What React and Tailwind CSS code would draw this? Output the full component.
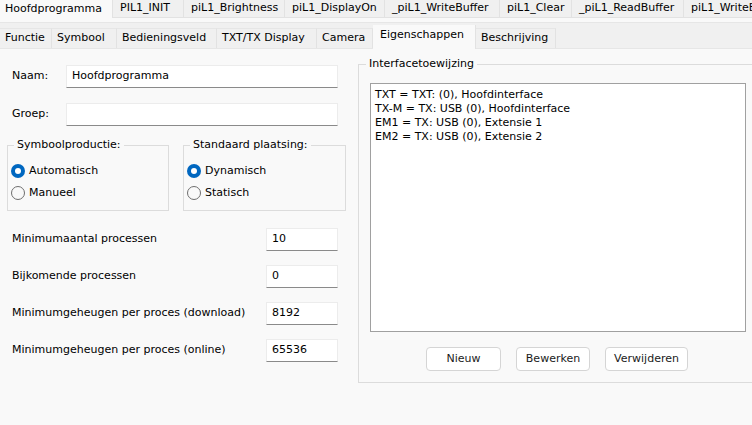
import React from "react";

const row1 = [
  ["Hoofdprogramma", 113, true],
  ["PIL1_INIT", 71],
  ["piL1_Brightness", 101],
  ["piL1_DisplayOn", 100],
  ["_piL1_WriteBuffer", 115],
  ["piL1_Clear", 72],
  ["_piL1_ReadBuffer", 112],
  ["piL1_WriteBuffer", 110],
];
const row2 = [
  ["Functie", 52],
  ["Symbool", 65],
  ["Bedieningsveld", 100],
  ["TXT/TX Display", 100],
  ["Camera", 56],
  ["Eigenschappen", 103, true],
  ["Beschrijving", 80],
];

function Radio({ checked, label }) {
  return (
    <div className="flex items-center h-[22px]">
      {checked ? (
        <span className="w-[14px] h-[14px] rounded-full bg-[#0067c0] flex items-center justify-center shrink-0">
          <span className="w-[6px] h-[6px] rounded-full bg-white" />
        </span>
      ) : (
        <span className="w-[14px] h-[14px] rounded-full border border-[#6e6e6e] bg-[#f9f9f9] shrink-0" />
      )}
      <span className="ml-[4px]">{label}</span>
    </div>
  );
}

function Group({ title, className, children }) {
  return (
    <div className={"relative border border-[#dcdcdc] " + className}>
      <span className="absolute -top-[8px] left-[6px] px-[3px] bg-[#f9f9f9] leading-[14px]">{title}</span>
      {children}
    </div>
  );
}

function Field({ label, value }) {
  return (
    <div className="flex items-center h-[23px]">
      <span className="w-[266px] pl-[12px] shrink-0">{label}</span>
      <div className="w-[72px] h-[23px] bg-white border border-[#ececec] border-b-[#8a8a8a] flex items-center pl-[5px]">
        {value}
      </div>
    </div>
  );
}

function Btn({ children, w }) {
  return (
    <div
      className="h-[24px] bg-white border border-[#d5d5d5] rounded-[4px] flex items-center justify-center text-[#1a1a1a]"
      style={{ width: w }}
    >
      {children}
    </div>
  );
}

export default function App() {
  return (
    <div
      className="w-[752px] h-[425px] overflow-hidden bg-[#f9f9f9] text-[11px] text-black"
      style={{ fontFamily: '"DejaVu Sans", Tahoma, sans-serif' }}
    >
      {/* row 1 tabs */}
      <div className="flex h-[18px] bg-[#f0f0f0] whitespace-nowrap overflow-hidden">
        {row1.map(([t, w, sel]) => (
          <div
            key={t}
            className={
              "shrink-0 h-[18px] flex items-center border-r border-[#e2e2e2] overflow-hidden " +
              (sel ? "bg-[#f9f9f9] pl-[5px]" : "bg-[#f0f0f0] pl-[7px] border-b border-b-[#e2e2e2]")
            }
            style={{ width: w }}
          >
            {t}
          </div>
        ))}
      </div>
      <div className="h-[4px] bg-[#f9f9f9]" />
      {/* row 2 tabs */}
      <div className="flex items-end h-[27px] bg-[#f0f0f0] border-t border-[#e6e6e6] border-b border-b-[#e6e6e6] whitespace-nowrap">
        {row2.map(([t, w, sel]) => (
          <div
            key={t}
            className={
              "shrink-0 flex items-center border-r border-[#e2e2e2] " +
              (sel
                ? "h-[24px] bg-[#f9f9f9] pl-[7px] -mb-[1px] pb-[3px]"
                : "h-[20px] bg-[#f0f0f0] pl-[5px] border-t border-t-[#e6e6e6]")
            }
            style={{ width: w }}
          >
            {t}
          </div>
        ))}
      </div>

      {/* content */}
      <div className="flex">
        {/* left column */}
        <div className="w-[358px] shrink-0">
          <div className="flex items-center h-[23px] mt-[16px]">
            <span className="w-[66px] pl-[12px]">Naam:</span>
            <div className="w-[272px] h-[23px] bg-white border border-[#ececec] border-b-[#8a8a8a] flex items-center pl-[5px]">
              Hoofdprogramma
            </div>
          </div>
          <div className="flex items-center h-[23px] mt-[15px]">
            <span className="w-[66px] pl-[12px]">Groep:</span>
            <div className="w-[272px] h-[23px] bg-white border border-[#ececec] border-b-[#8a8a8a]" />
          </div>
          <div className="flex mt-[19px] pl-[7px]">
            <Group title="Symboolproductie:" className="w-[162px] h-[66px] pt-[14px] pl-[3px]">
              <Radio checked label="Automatisch" />
              <Radio label="Manueel" />
            </Group>
            <Group title="Standaard plaatsing:" className="w-[163px] h-[66px] ml-[14px] pt-[14px] pl-[3px]">
              <Radio checked label="Dynamisch" />
              <Radio label="Statisch" />
            </Group>
          </div>
          <div className="flex flex-col gap-[14px] mt-[17px]">
            <Field label="Minimumaantal processen" value="10" />
            <Field label="Bijkomende processen" value="0" />
            <Field label="Minimumgeheugen per proces (download)" value="8192" />
            <Field label="Minimumgeheugen per proces (online)" value="65536" />
          </div>
        </div>

        {/* right group */}
        <div className="relative mt-[15px] w-[400px] h-[319px] border border-[#dcdcdc] shrink-0">
          <span className="absolute -top-[8px] left-[7px] px-[3px] bg-[#f9f9f9] leading-[14px]">Interfacetoewijzing</span>
          <div className="ml-[11px] mt-[18px] w-[376px] h-[249px] bg-white border border-[#a0a0a0] pt-[4px] pl-[4px] leading-[14px]">
            <div>TXT = TXT: (0), Hoofdinterface</div>
            <div>TX-M = TX: USB (0), Hoofdinterface</div>
            <div>EM1 = TX: USB (0), Extensie 1</div>
            <div>EM2 = TX: USB (0), Extensie 2</div>
          </div>
          <div className="flex mt-[15px] ml-[67px] gap-[15px]">
            <Btn w={75}>Nieuw</Btn>
            <Btn w={74}>Bewerken</Btn>
            <Btn w={83}>Verwijderen</Btn>
          </div>
        </div>
      </div>
    </div>
  );
}
